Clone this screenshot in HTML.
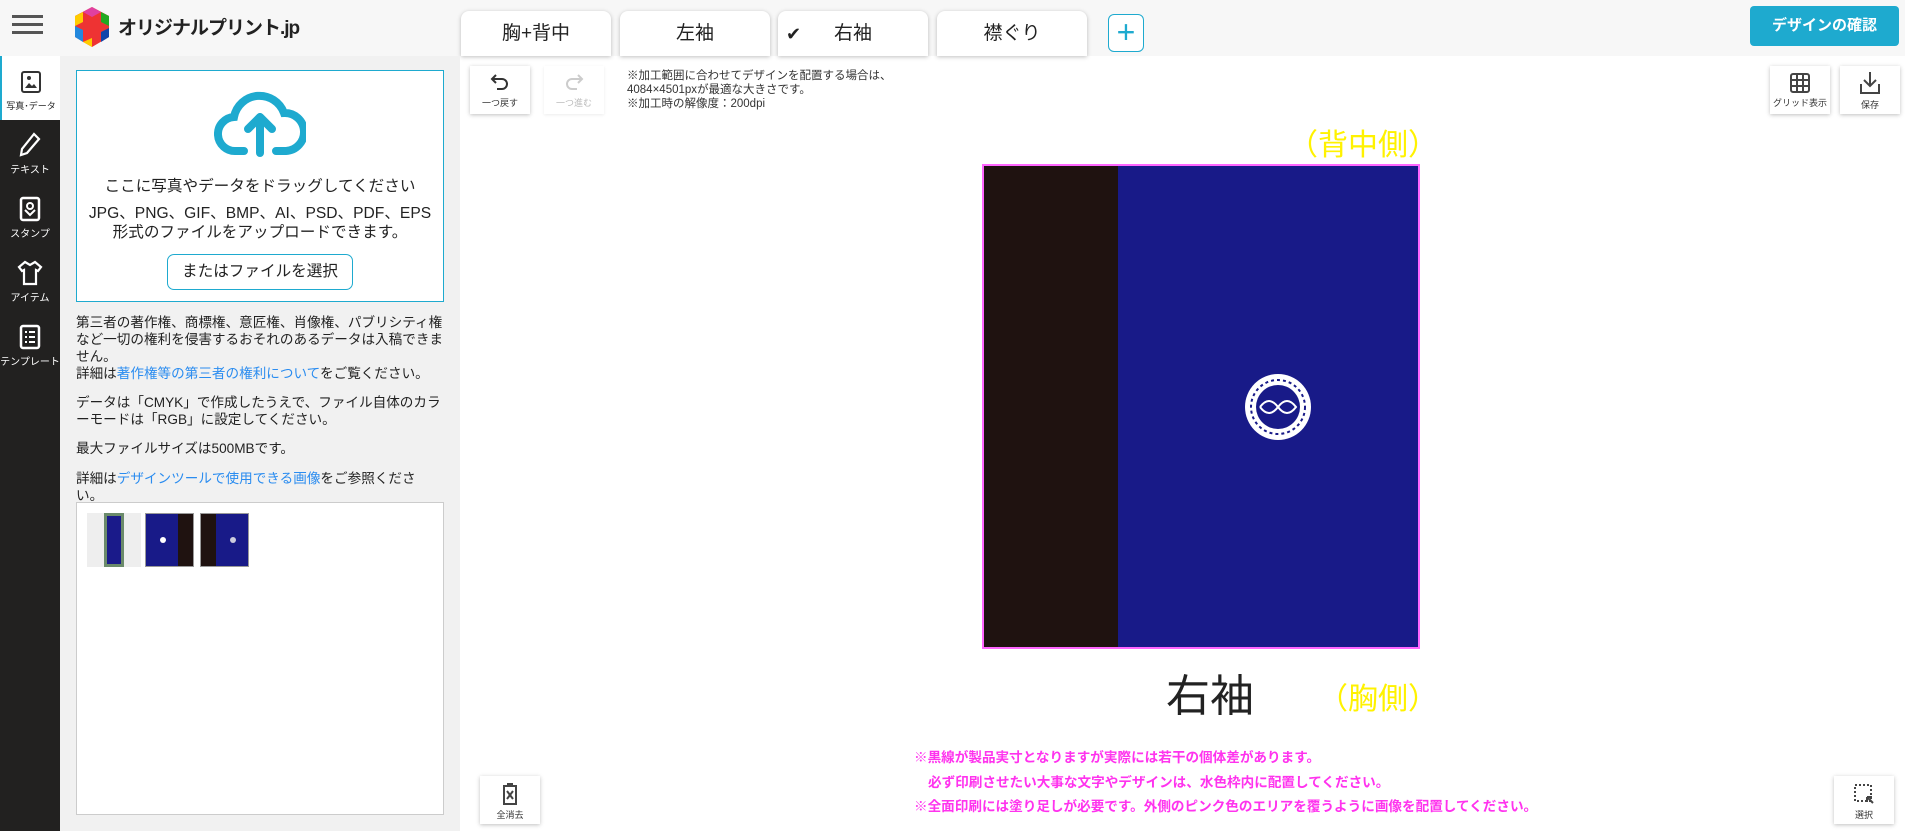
<!DOCTYPE html>
<html><head><meta charset="utf-8"><style>
*{box-sizing:border-box;margin:0;padding:0}
body{width:1905px;height:831px;overflow:hidden;position:relative;background:#fff;font-family:"Liberation Sans","Noto Sans CJK JP",sans-serif;color:#222}
.abs{position:absolute}
.hdr{left:0;top:0;width:1905px;height:56px;background:#f7f7f7}
.tab{top:11px;height:45px;width:150px;background:#fff;border-radius:8px 8px 0 0;box-shadow:0 1px 4px rgba(0,0,0,.25);font-size:19px;text-align:center;line-height:46px}
.side{left:0;top:56px;width:60px;height:775px;background:#222120}
.si{left:0;width:60px;text-align:center;color:#fff;font-size:10px}
.panel{left:60px;top:56px;width:400px;height:775px;background:#f1f1f1}
.btn{width:60px;height:48px;background:#fff;box-shadow:0 1px 4px rgba(0,0,0,.25);font-size:9px;text-align:center;color:#333}
.pt{font-size:13.6px;line-height:17px;color:#222}
a{color:#2a8cf0;text-decoration:none}
.pink{color:#ff33ee;font-weight:bold;font-size:13.6px;left:914px}
</style></head><body>
<div class="abs hdr"></div>
<div class="abs" style="left:12px;top:15px;width:31px;height:3px;background:#555;box-shadow:0 8px 0 #555,0 16px 0 #555"></div>
<svg class="abs" style="left:72px;top:6px" width="40" height="42" viewBox="0 0 40 42"><polygon points="20,1 37,10 37,31 20,41 3,31 3,10" fill="#e33"/><polygon points="20,1 29,6 20,11 11,6" fill="#e040a0"/><polygon points="29,6 37,10 37,20 29,16" fill="#2a2"/><polygon points="3,10 11,6 11,16 3,20" fill="#fc0"/><polygon points="3,20 11,24 11,36 3,31" fill="#28d"/><polygon points="29,26 37,22 37,31 29,36" fill="#14a"/><polygon points="11,36 20,41 20,32" fill="#fc0"/></svg>
<div class="abs" style="left:118px;top:13px;font-size:19px;font-weight:bold;letter-spacing:-1px;color:#222">オリジナルプリント.jp</div>
<div class="abs tab" style="left:461px">胸+背中</div>
<div class="abs tab" style="left:620px">左袖</div>
<div class="abs tab" style="left:778px"><span style="position:absolute;left:8px;font-size:18px">✔</span>右袖</div>
<div class="abs tab" style="left:937px">襟ぐり</div>
<div class="abs" style="left:1108px;top:14px;width:36px;height:38px;border:1.5px solid #1eaacf;border-radius:6px;background:#fff;color:#1eaacf;font-size:32px;line-height:34px;text-align:center">+</div>
<div class="abs" style="left:1750px;top:6px;width:149px;height:40px;background:#1eaacf;border-radius:4px;color:#fff;font-weight:bold;font-size:15px;text-align:center;line-height:40px">デザインの確認</div>

<div class="abs side"></div>
<div class="abs si" style="top:56px;height:64px;background:#fff;color:#222;border-left:2px solid #1eaacf">
<svg style="margin-top:14px" width="22" height="24" viewBox="0 0 22 24"><rect x="2" y="2" width="18" height="20" rx="2" fill="none" stroke="#333" stroke-width="2"/><path d="M5 18l4-5 3 3 2-2 3 4z" fill="#333"/><circle cx="9" cy="8" r="2" fill="#333"/></svg><div style="font-size:9px;margin-top:2px">写真･データ</div></div>
<div class="abs si" style="top:132px"><svg width="22" height="26" viewBox="0 0 22 26"><path d="M15 2l5 5-12 14-6 2 1-6z" fill="none" stroke="#fff" stroke-width="2.2"/></svg><div>テキスト</div></div>
<div class="abs si" style="top:196px"><svg width="22" height="26" viewBox="0 0 22 26"><rect x="2" y="2" width="18" height="22" rx="2" fill="none" stroke="#fff" stroke-width="2.5"/><circle cx="11" cy="10" r="3" fill="none" stroke="#fff" stroke-width="2"/><path d="M6 14l5 5 5-5" fill="none" stroke="#fff" stroke-width="2"/></svg><div>スタンプ</div></div>
<div class="abs si" style="top:260px"><svg width="26" height="26" viewBox="0 0 26 26"><path d="M8 2l5 3 5-3 6 5-3 4-2-1v14H7V10l-2 1-3-4z" fill="none" stroke="#fff" stroke-width="2.2"/></svg><div>アイテム</div></div>
<div class="abs si" style="top:324px"><svg width="22" height="26" viewBox="0 0 22 26"><rect x="2" y="2" width="18" height="22" rx="2" fill="none" stroke="#fff" stroke-width="2.5"/><path d="M6 8h2M10 8h6M6 13h2M10 13h6M6 18h2M10 18h6" stroke="#fff" stroke-width="2"/></svg><div>テンプレート</div></div>

<div class="abs panel"></div>
<div class="abs" style="left:76px;top:70px;width:368px;height:232px;background:#fff;border:1.5px solid #1eaacf;text-align:center">
<svg style="margin-top:16px" width="92" height="70" viewBox="0 0 92 70"><path d="M30 64H22A17 17 0 0 1 20 30 26 26 0 0 1 70 26 18 18 0 0 1 72 64H62" fill="none" stroke="#1eaacf" stroke-width="8" stroke-linecap="round"/><path d="M46 66V30M34 42l12-12 12 12" fill="none" stroke="#1eaacf" stroke-width="8" stroke-linecap="round" stroke-linejoin="round"/></svg>
<div style="font-size:15.6px;margin-top:12px">ここに写真やデータをドラッグしてください</div>
<div style="font-size:15.6px;margin-top:8px;line-height:19px">JPG、PNG、GIF、BMP、AI、PSD、PDF、EPS<br>形式のファイルをアップロードできます。</div>
<div style="display:inline-block;margin-top:12px;border:1.5px solid #1eaacf;border-radius:7px;padding:0 14px;height:36px;line-height:34px;font-size:15.6px">またはファイルを選択</div>
</div>
<div class="abs pt" style="left:76px;top:314px;width:370px">第三者の著作権、商標権、意匠権、肖像権、パブリシティ権など一切の権利を侵害するおそれのあるデータは入稿できません。<br>詳細は<a>著作権等の第三者の権利について</a>をご覧ください。</div>
<div class="abs pt" style="left:76px;top:394px;width:370px">データは「CMYK」で作成したうえで、ファイル自体のカラーモードは「RGB」に設定してください。</div>
<div class="abs pt" style="left:76px;top:440px">最大ファイルサイズは500MBです。</div>
<div class="abs pt" style="left:76px;top:470px;width:360px">詳細は<a>デザインツールで使用できる画像</a>をご参照ください。</div>
<div class="abs" style="left:76px;top:502px;width:368px;height:313px;background:#fff;border:1.5px solid #ccc"></div>
<div class="abs" style="left:87px;top:513px;width:54px;height:54px;background:#eee"><div style="position:absolute;left:17px;top:0;width:20px;height:54px;background:#1a1a8a;border:3px solid #6a8a6a"></div></div>
<div class="abs" style="left:145px;top:513px;width:49px;height:54px;background:#181a88;border:1px solid #999"><div style="position:absolute;right:0;top:0;width:15px;height:52px;background:#1f1210"></div><div style="position:absolute;left:14px;top:23px;width:6px;height:6px;border-radius:50%;background:#fff"></div></div>
<div class="abs" style="left:200px;top:513px;width:49px;height:54px;background:#181a88;border:1px solid #999"><div style="position:absolute;left:0;top:0;width:15px;height:52px;background:#1f1210"></div><div style="position:absolute;left:29px;top:23px;width:6px;height:6px;border-radius:50%;background:#ccd"></div></div>

<div class="abs btn" style="left:470px;top:66px"><svg style="margin-top:6px" width="22" height="22" viewBox="0 0 22 22"><path d="M7 3L3 7l4 4M3 7h10a5 5 0 0 1 0 10H8" fill="none" stroke="#333" stroke-width="2"/></svg><div>一つ戻す</div></div>
<div class="abs btn" style="left:544px;top:66px;box-shadow:0 1px 3px rgba(0,0,0,.08);color:#bbb"><svg style="margin-top:6px" width="22" height="22" viewBox="0 0 22 22"><path d="M15 3l4 4-4 4M19 7H9a5 5 0 0 0 0 10h5" fill="none" stroke="#ccc" stroke-width="2"/></svg><div>一つ進む</div></div>
<div class="abs" style="left:627px;top:69px;font-size:11.5px;line-height:14px;color:#333">※加工範囲に合わせてデザインを配置する場合は、<br>4084×4501pxが最適な大きさです。<br>※加工時の解像度：200dpi</div>
<div class="abs btn" style="left:1770px;top:66px"><svg style="margin-top:6px" width="22" height="22" viewBox="0 0 22 22"><rect x="2" y="2" width="18" height="18" rx="2" fill="none" stroke="#444" stroke-width="2"/><path d="M8 2v18M14 2v18M2 8h18M2 14h18" stroke="#444" stroke-width="2"/></svg><div>グリッド表示</div></div>
<div class="abs btn" style="left:1840px;top:66px"><svg style="margin-top:4px" width="24" height="26" viewBox="0 0 24 26"><path d="M12 2v14M6 10l6 6 6-6M3 14v9h18v-9" fill="none" stroke="#444" stroke-width="2"/></svg><div>保存</div></div>

<div class="abs" style="left:1288px;top:120px;font-size:30px;color:#fff200">（背中側）</div>
<div class="abs" style="left:982px;top:164px;width:438px;height:485px;border:2px solid #ff66ff;background:#181a88"><div style="position:absolute;left:0;top:0;width:134px;height:100%;background:#1f1210"></div></div>
<svg class="abs" style="left:1244px;top:373px" width="68" height="68" viewBox="0 0 68 68"><circle cx="34" cy="34" r="33" fill="#fff"/><circle cx="34" cy="34" r="22" fill="#181a88"/><circle cx="34" cy="34" r="27" fill="none" stroke="#181a88" stroke-width="2" stroke-dasharray="3 3"/><path d="M16 34c6-8 12-8 18 0s12 8 18 0c-6-8-12-8-18 0s-12 8-18 0" fill="none" stroke="#fff" stroke-width="2"/></svg>
<div class="abs" style="left:1166px;top:660px;font-size:44px;color:#222">右袖</div>
<div class="abs" style="left:1318px;top:674px;font-size:30px;color:#fff200">（胸側）</div>
<div class="abs pink" style="top:746px">※黒線が製品実寸となりますが実際には若干の個体差があります。</div>
<div class="abs pink" style="top:771px;left:928px">必ず印刷させたい大事な文字やデザインは、水色枠内に配置してください。</div>
<div class="abs pink" style="top:795px">※全面印刷には塗り足しが必要です。外側のピンク色のエリアを覆うように画像を配置してください。</div>
<div class="abs btn" style="left:480px;top:776px"><svg style="margin-top:6px" width="18" height="24" viewBox="0 0 18 24"><path d="M2 4h14M6 2h6M3 4v18h12V4M6 9l6 8M12 9l-6 8" fill="none" stroke="#444" stroke-width="2"/></svg><div>全消去</div></div>
<div class="abs btn" style="left:1834px;top:776px"><svg style="margin-top:6px" width="24" height="24" viewBox="0 0 24 24"><rect x="3" y="3" width="16" height="16" fill="none" stroke="#444" stroke-width="2" stroke-dasharray="2 2"/><path d="M15 15l6 6M15 15v5M15 15h5" stroke="#444" stroke-width="2"/></svg><div>選択</div></div>
</body></html>
